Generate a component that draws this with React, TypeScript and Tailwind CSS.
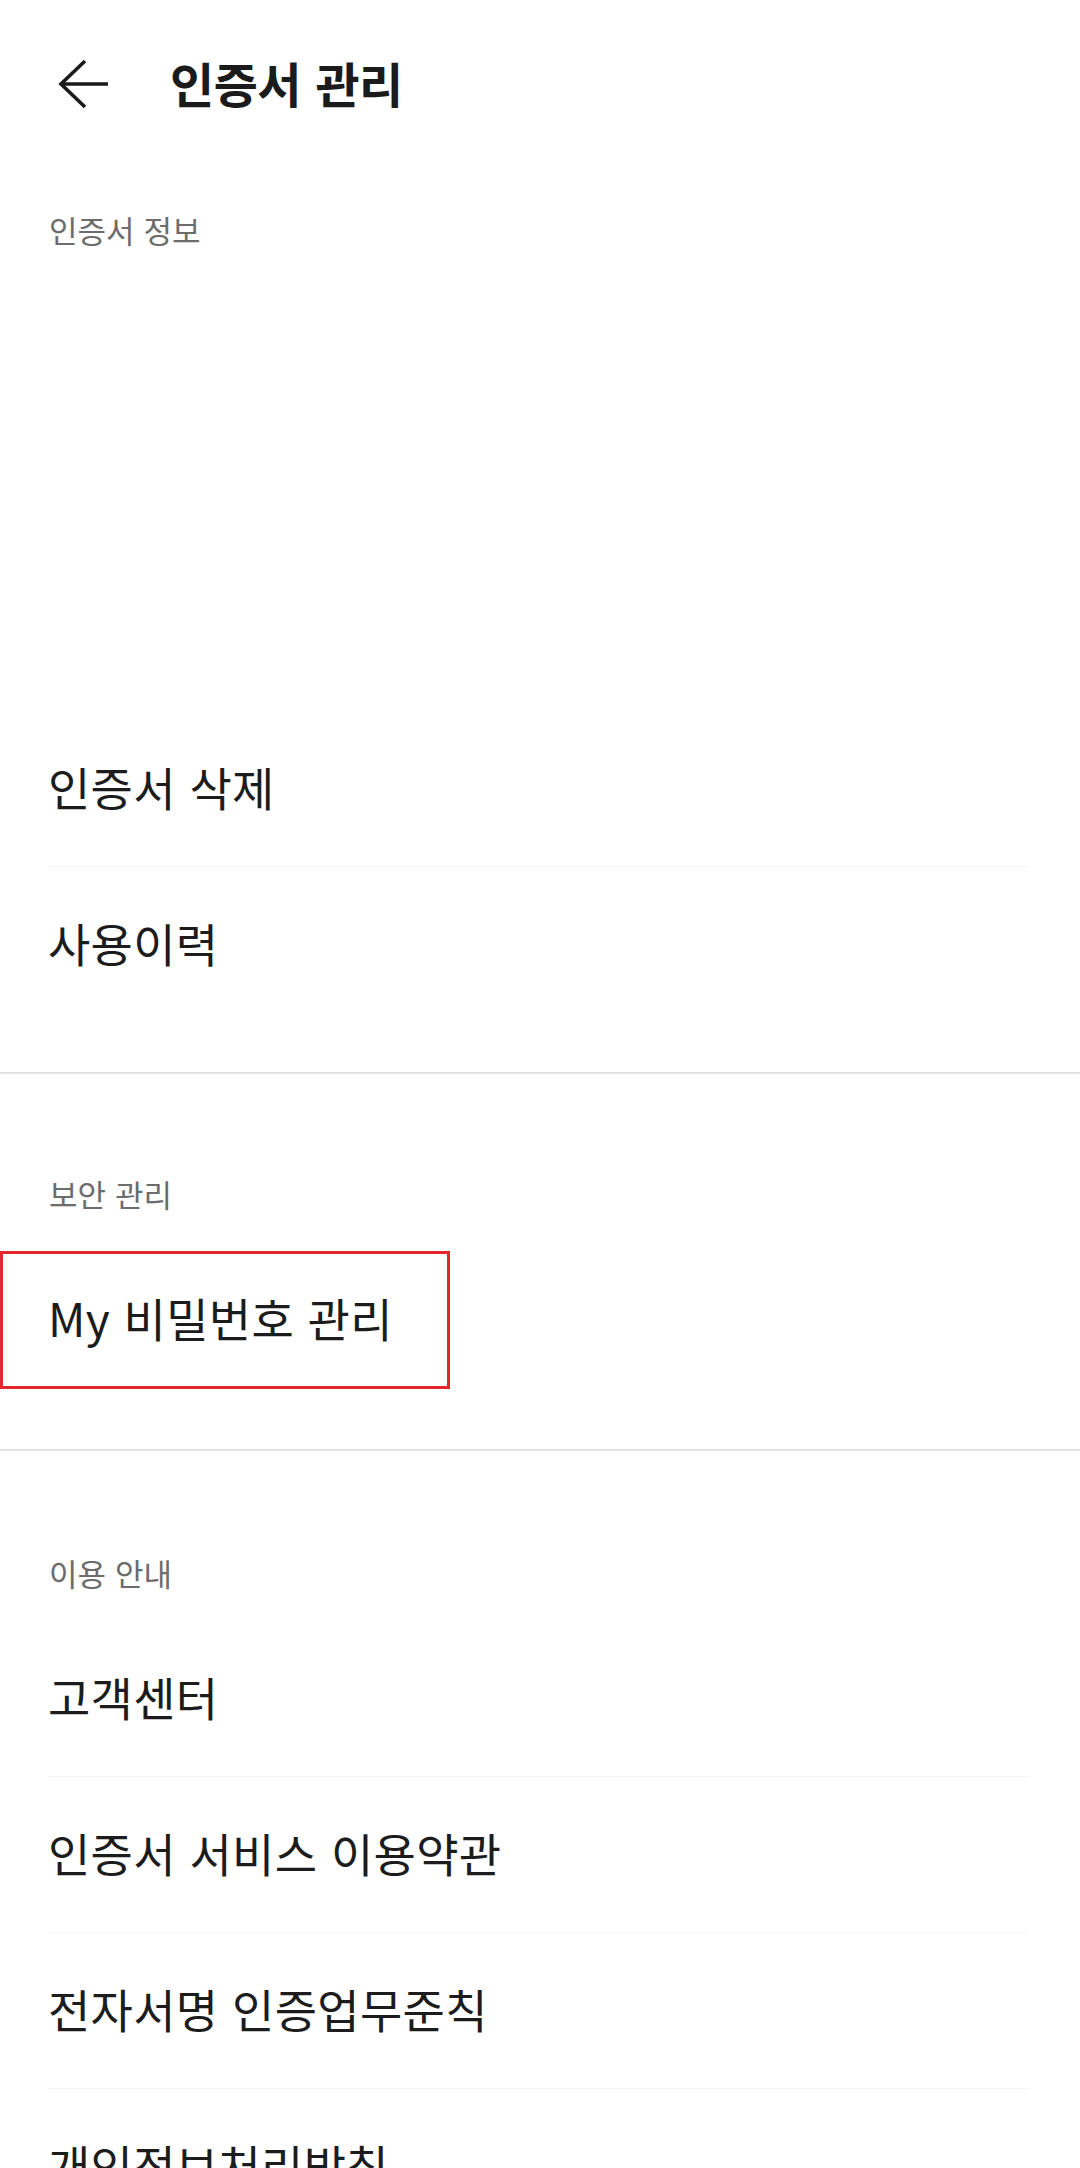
import React from "react";

const FONT = "font-['Noto_Sans_CJK_KR','Noto_Sans',sans-serif]";

function Row({ text, divider = false, children }: { text: string; divider?: boolean; children?: React.ReactNode }) {
  return (
    <div>
      <div className="relative flex h-[155px] items-center pb-[6px] pl-[48px]">
        <span className="text-[46px] leading-none tracking-[0.3px] [word-spacing:3px] text-[#1c1c1c]">{text}</span>
        {children}
      </div>
      {divider && <div className="ml-[48px] mr-[53px] h-px bg-[#f4f4f4]" />}
    </div>
  );
}

function Label({ text }: { text: string }) {
  return (
    <div className="flex h-[36px] items-center pl-[49px]">
      <span className="text-[31px] leading-none [word-spacing:2px] text-[#6c6c6c]">{text}</span>
    </div>
  );
}

export default function App() {
  return (
    <div className={`${FONT} h-[2168px] w-[1080px] overflow-hidden bg-white`}>
      {/* Header */}
      <div className="flex h-[168px] items-center">
        <svg className="ml-[56px]" width="56" height="56" viewBox="0 0 56 56" fill="none">
          <path d="M29 5 L5 28 L29 51" stroke="#1b1b1b" strokeWidth="3.6" strokeLinecap="butt" strokeLinejoin="miter" />
          <path d="M5 28 H52" stroke="#1b1b1b" strokeWidth="3.6" />
        </svg>
        <h1 className="ml-[58px] pb-[4px] text-[48px] font-bold leading-none tracking-[-0.5px] [word-spacing:4px] text-[#1b1b1b]">
          인증서 관리
        </h1>
      </div>

      {/* Section 1 */}
      <div className="pt-[43px]">
        <Label text="인증서 정보" />
      </div>
      <div className="h-[464px]" />
      <Row text="인증서 삭제" divider />
      <Row text="사용이력" />
      <div className="h-[50px]" />
      <div className="h-[2px] bg-[#e2e2e2]" />

      {/* Section 2 */}
      <div className="pt-[101px]">
        <Label text="보안 관리" />
      </div>
      <div className="h-[31px]" />
      <Row text="My 비밀번호 관리">
        <div className="absolute left-0 top-[9px] h-[138px] w-[450px] border-[3px] border-[#e3262f]" />
      </Row>
      <div className="h-[52px]" />
      <div className="h-[2px] bg-[#e2e2e2]" />

      {/* Section 3 */}
      <div className="pt-[103px]">
        <Label text="이용 안내" />
      </div>
      <div className="h-[31px]" />
      <Row text="고객센터" divider />
      <Row text="인증서 서비스 이용약관" divider />
      <Row text="전자서명 인증업무준칙" divider />
      <Row text="개인정보처리방침" />
    </div>
  );
}
